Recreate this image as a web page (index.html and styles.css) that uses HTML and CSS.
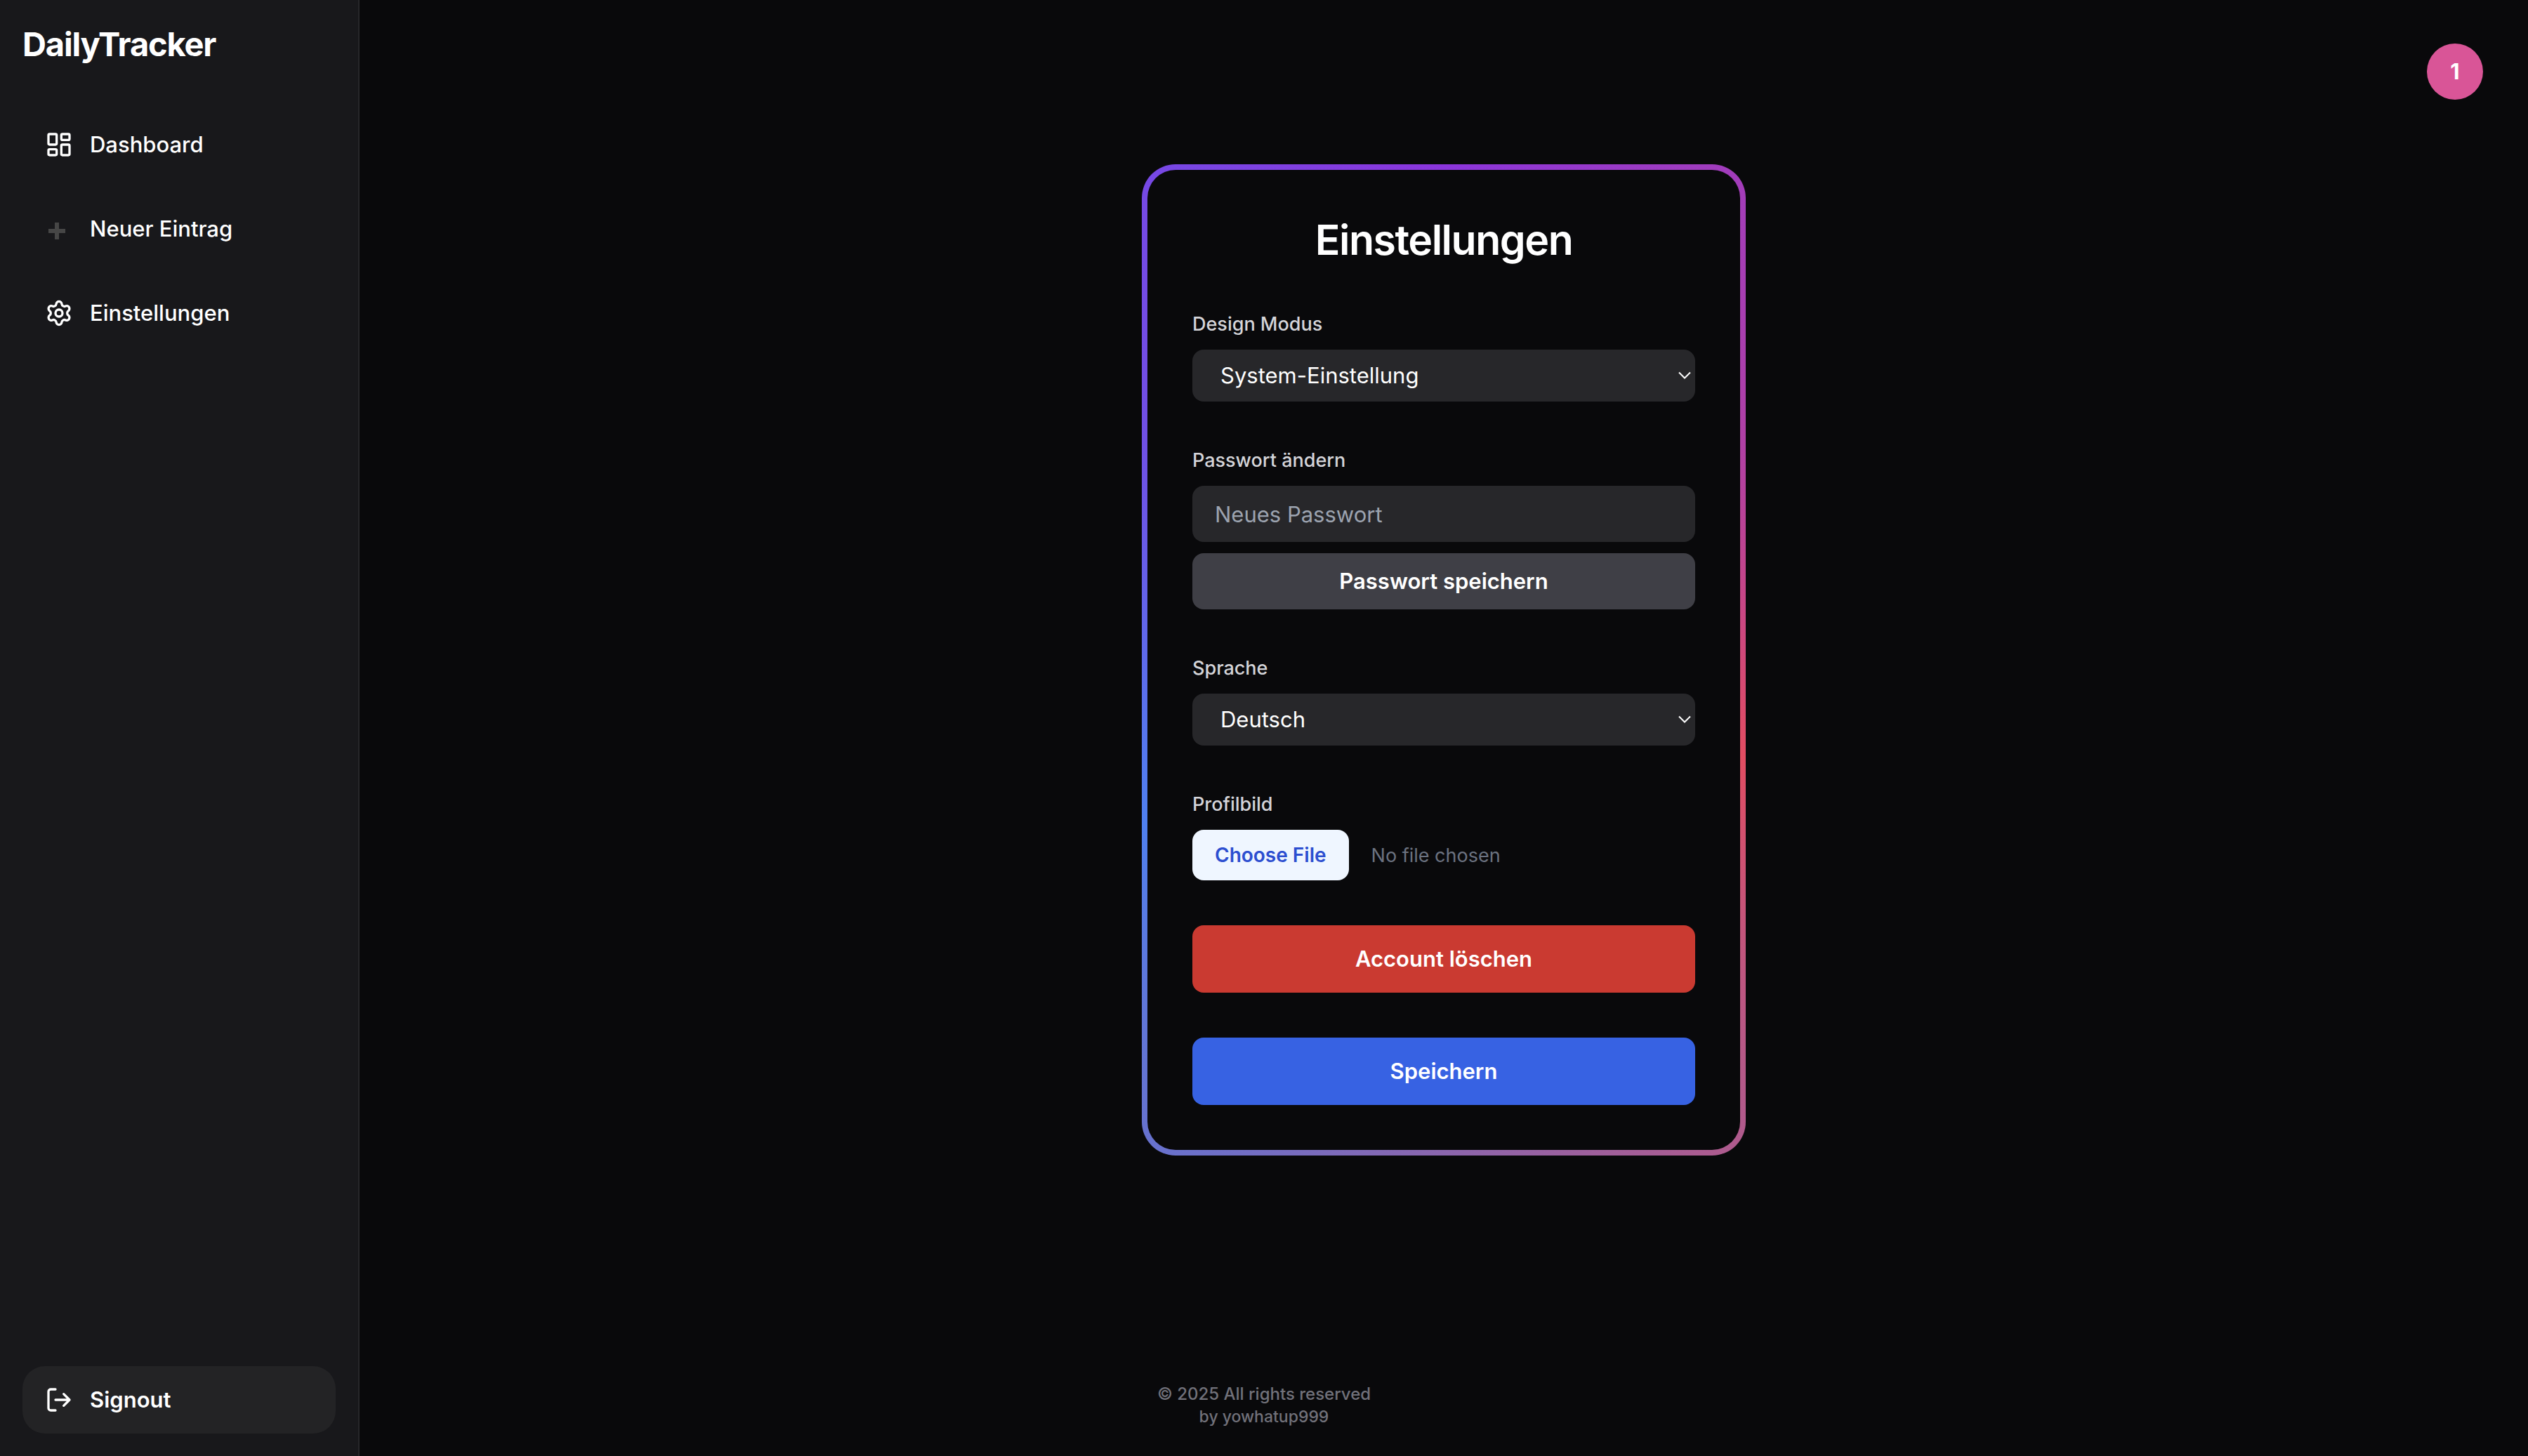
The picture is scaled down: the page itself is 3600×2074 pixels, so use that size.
FILE: index.html
```html
<!DOCTYPE html>
<html lang="de">
<head>
<meta charset="utf-8">
<title>DailyTracker – Einstellungen</title>
<link rel="stylesheet" href="styles.css">
</head>
<body>
<aside class="sidebar">
  <div class="brand">DailyTracker</div>
  <nav class="nav">
    <a class="nav-item" href="#dashboard">
      <svg class="icon" viewBox="0 0 24 24"><rect x="3" y="3" width="7" height="9" rx="1"/><rect x="14" y="3" width="7" height="5" rx="1"/><rect x="14" y="12" width="7" height="9" rx="1"/><rect x="3" y="16" width="7" height="5" rx="1"/></svg>
      <span>Dashboard</span>
    </a>
    <a class="nav-item" href="#neu">
      <svg class="icon icon-plus" viewBox="0 0 40 40"><path d="M5 23h24M17 11v24"/></svg>
      <span>Neuer Eintrag</span>
    </a>
    <a class="nav-item" href="#einstellungen">
      <svg class="icon" viewBox="0 0 24 24"><path d="M9.671 4.136a2.34 2.34 0 0 1 4.659 0 2.34 2.34 0 0 0 3.319 1.915 2.34 2.34 0 0 1 2.33 4.033 2.34 2.34 0 0 0 0 3.831 2.34 2.34 0 0 1-2.33 4.033 2.34 2.34 0 0 0-3.319 1.915 2.34 2.34 0 0 1-4.659 0 2.34 2.34 0 0 0-3.32-1.915 2.34 2.34 0 0 1-2.33-4.033 2.34 2.34 0 0 0 0-3.831A2.34 2.34 0 0 1 6.35 6.051a2.34 2.34 0 0 0 3.319-1.915"/><circle cx="12" cy="12" r="3"/></svg>
      <span>Einstellungen</span>
    </a>
  </nav>
  <button class="nav-item signout" type="button">
    <svg class="icon" viewBox="0 0 24 24"><path d="M9 21H5a2 2 0 0 1-2-2V5a2 2 0 0 1 2-2h4M16 17l5-5-5-5M21 12H9"/></svg>
    <span>Signout</span>
  </button>
</aside>

<main class="main">
  <form class="card">
    <h1 class="title">Einstellungen</h1>

    <div class="field">
      <label class="label" for="mode">Design Modus</label>
      <div class="select-wrap">
        <select class="control select" id="mode"><option>System-Einstellung</option><option>Hell</option><option>Dunkel</option></select>
        <svg class="chevron" viewBox="0 0 20 12"><path d="M2 1.500l8 8 8-8"/></svg>
      </div>
    </div>

    <div class="field">
      <label class="label" for="password">Passwort ändern</label>
      <div class="stack">
        <input class="control input" id="password" type="password" placeholder="Neues Passwort">
        <button class="button button-muted" type="button">Passwort speichern</button>
      </div>
    </div>

    <div class="field">
      <label class="label" for="language">Sprache</label>
      <div class="select-wrap">
        <select class="control select" id="language"><option>Deutsch</option><option>English</option></select>
        <svg class="chevron" viewBox="0 0 20 12"><path d="M2 1.500l8 8 8-8"/></svg>
      </div>
    </div>

    <div class="field">
      <label class="label" for="picture">Profilbild</label>
      <input class="file" id="picture" type="file">
    </div>

    <button class="button button-large button-danger" type="button">Account löschen</button>
    <button class="button button-large button-primary" type="submit">Speichern</button>
  </form>
</main>

<button class="avatar" type="button">1</button>

<footer class="footer">
  <p class="footer-line">© 2025 All rights reserved</p>
  <p class="footer-line footer-author">by yowhatup999</p>
</footer>
</body>
</html>
```

FILE: styles.css
```css
* {
  box-sizing: border-box;
  margin: 0;
}

body {
  display: flex;
  min-height: 100vh;
  background: #09090b;
  color: #fff;
  font-family: Inter, "Liberation Sans", sans-serif;
  font-size: 31px;
  line-height: 48px;
}

button,
input,
select {
  font: inherit;
  color: inherit;
  border: 0;
}

.sidebar {
  display: flex;
  flex-direction: column;
  flex: none;
  width: 512px;
  padding: 32px;
  background: #18181b;
  border-right: 2px solid #27272a;
}

.brand {
  margin-bottom: 64px;
  font-size: 47px;
  line-height: 62px;
  font-weight: 700;
  letter-spacing: -0.025em;
}

.nav {
  display: flex;
  flex-direction: column;
  gap: 24px;
}

.nav-item {
  display: flex;
  align-items: center;
  gap: 24px;
  padding: 24px 32px;
  border-radius: 32px;
  color: #fff;
  font-weight: 500;
  text-decoration: none;
}

.signout {
  margin-top: auto;
  background: #232325;
  font-weight: 600;
}

.icon {
  flex: none;
  width: 40px;
  height: 40px;
  fill: none;
  stroke: currentColor;
  stroke-width: 2;
  stroke-linecap: round;
  stroke-linejoin: round;
}

.icon-plus {
  stroke: #464646;
  stroke-width: 6;
  stroke-linecap: butt;
}

.main {
  display: flex;
  flex: 1;
  flex-direction: column;
  align-items: center;
  padding: 234px 64px;
}

.card {
  display: flex;
  flex-direction: column;
  gap: 64px;
  width: 100%;
  max-width: 860px;
  padding: 64px;
  border: 8px solid transparent;
  border-radius: 48px;
  background:
    linear-gradient(#09090b, #09090b) padding-box,
    conic-gradient(#8b35dc, #a33db9 9%, #b040a5 15%, #e24d62 30%, #b05a8c 41%, #6672cf 59%, #4f80f0 67%, #7050e5 85%, #7649e5 91%, #8b35dc) border-box;
}

.title {
  font-size: 59px;
  line-height: 72px;
  font-weight: 600;
  letter-spacing: -0.025em;
  text-align: center;
}

.field {
  display: flex;
  flex-direction: column;
  gap: 16px;
}

.label {
  color: #d4d4d8;
  font-size: 27px;
  line-height: 40px;
  font-weight: 500;
}

.stack {
  display: flex;
  flex-direction: column;
  gap: 16px;
}

.control {
  width: 100%;
  border-radius: 16px;
  background: #27272a;
}

.select-wrap {
  display: grid;
  align-items: center;
}

.select-wrap > * {
  grid-area: 1 / 1;
}

.select {
  height: 74px;
  padding: 0 40px;
  appearance: none;
}

.chevron {
  justify-self: end;
  width: 20px;
  height: 12px;
  margin-right: 5px;
  fill: none;
  stroke: #fff;
  stroke-width: 2;
  pointer-events: none;
}

.input {
  height: 80px;
  padding: 16px 32px;
}

.input::placeholder {
  color: #9ca3af;
  opacity: 1;
}

.button {
  padding: 16px 32px;
  border-radius: 16px;
  font-weight: 600;
}

.button-large {
  padding: 24px 32px;
}

.button-muted {
  background: #3f3f46;
}

.button-danger {
  background: #ca3a31;
}

.button-primary {
  background: #3762e3;
}

.file {
  width: 100%;
  height: 72px;
  color: #6b7280;
  font-size: 27px;
  line-height: 40px;
}

.file::file-selector-button {
  margin-right: 32px;
  padding: 16px 32px;
  border: 0;
  border-radius: 16px;
  background: #eff6ff;
  color: #2c4ed0;
  font: inherit;
  font-size: 28px;
  font-weight: 600;
}

.avatar {
  position: absolute;
  top: 62px;
  right: 64px;
  width: 80px;
  height: 80px;
  padding: 0;
  border-radius: 50%;
  background: #d95597;
  font-weight: 700;
}

.footer {
  position: absolute;
  right: 0;
  bottom: 40px;
  left: 0;
  color: #71717a;
  font-weight: 500;
  text-align: center;
  pointer-events: none;
}

.footer-line {
  font-size: 24px;
  line-height: 32px;
}

.footer-author {
  font-size: 23px;
}
```
